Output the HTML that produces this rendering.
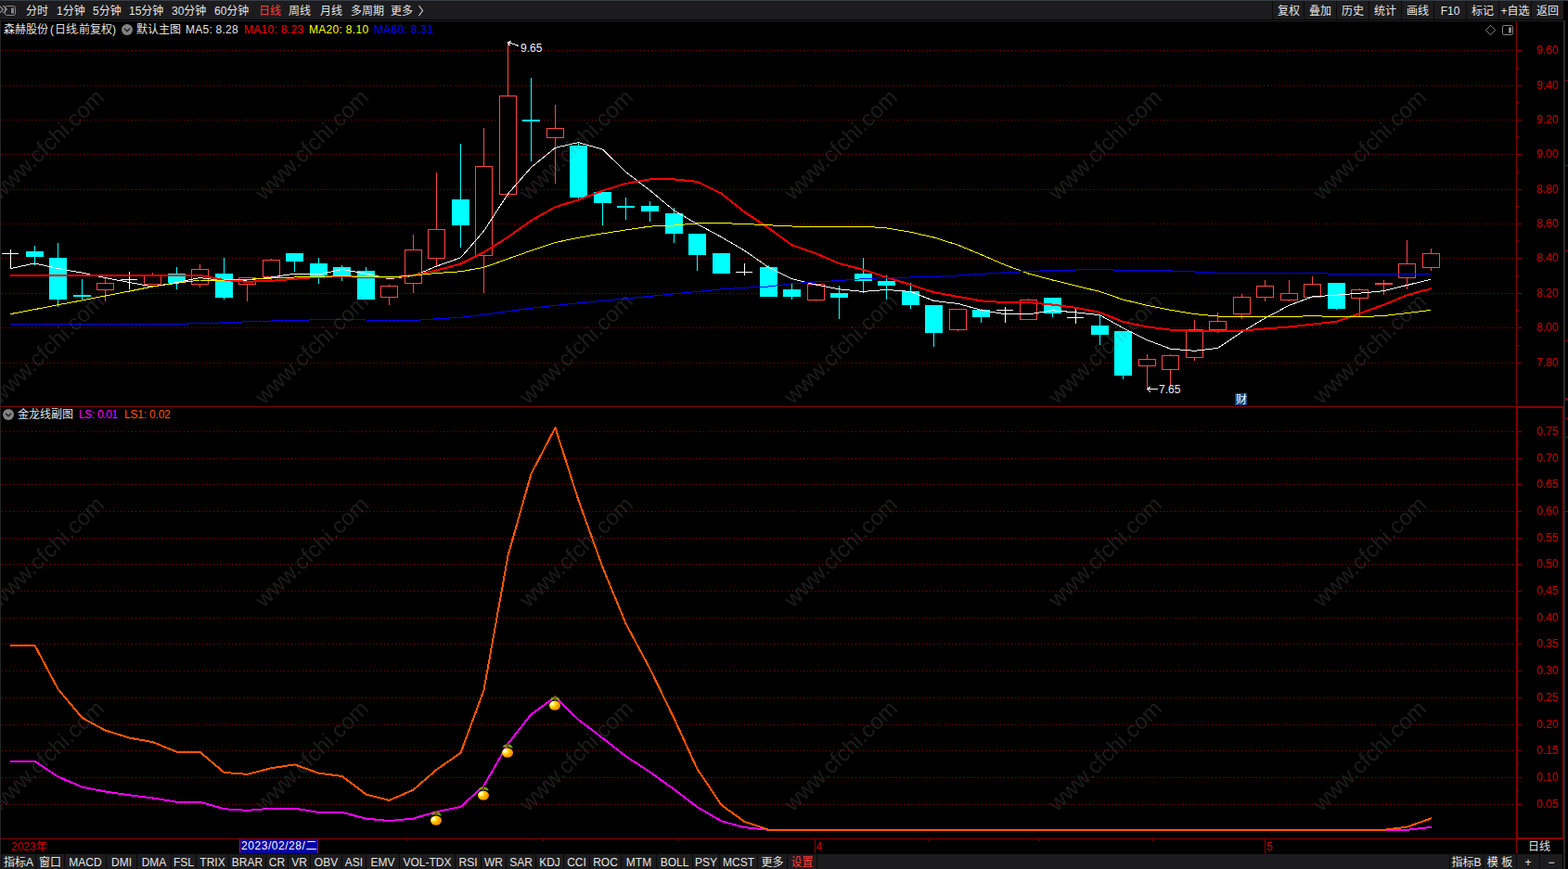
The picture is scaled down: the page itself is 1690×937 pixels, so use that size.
<!DOCTYPE html>
<html><head><meta charset="utf-8"><title>K线图</title>
<style>
html,body{margin:0;padding:0;background:#000;overflow:hidden;}
body{width:1690px;height:937px;position:relative;overflow:hidden;font-family:"Liberation Sans", "Noto Sans CJK SC", sans-serif;font-size:12px;line-height:14px;}
.abs{position:absolute;}
.t{position:absolute;white-space:nowrap;height:14px;line-height:14px;font-size:12px;}
.wm{position:absolute;width:200px;height:30px;line-height:30px;text-align:center;font-size:24px;color:#808080;opacity:0.22;filter:grayscale(1);transform:rotate(-44deg);white-space:nowrap;}
.btn{position:absolute;top:1px;height:20px;background:#1e1e20;}
.tab{position:absolute;top:921px;height:16px;background:#202022;}
#chart{position:absolute;left:0;top:0;}
</style></head><body>

<svg id="chart" width="1690" height="937" viewBox="0 0 1690 937" shape-rendering="crispEdges">
<line x1="2" y1="54.5" x2="1633" y2="54.5" stroke="#880000" stroke-width="1" stroke-dasharray="1 3"/>
<line x1="2" y1="92.5" x2="1633" y2="92.5" stroke="#880000" stroke-width="1" stroke-dasharray="1 3"/>
<line x1="2" y1="129.5" x2="1633" y2="129.5" stroke="#880000" stroke-width="1" stroke-dasharray="1 3"/>
<line x1="2" y1="166.5" x2="1633" y2="166.5" stroke="#880000" stroke-width="1" stroke-dasharray="1 3"/>
<line x1="2" y1="204.5" x2="1633" y2="204.5" stroke="#880000" stroke-width="1" stroke-dasharray="1 3"/>
<line x1="2" y1="241.5" x2="1633" y2="241.5" stroke="#880000" stroke-width="1" stroke-dasharray="1 3"/>
<line x1="2" y1="278.5" x2="1633" y2="278.5" stroke="#880000" stroke-width="1" stroke-dasharray="1 3"/>
<line x1="2" y1="316.5" x2="1633" y2="316.5" stroke="#880000" stroke-width="1" stroke-dasharray="1 3"/>
<line x1="2" y1="353.5" x2="1633" y2="353.5" stroke="#880000" stroke-width="1" stroke-dasharray="1 3"/>
<line x1="2" y1="391.5" x2="1633" y2="391.5" stroke="#880000" stroke-width="1" stroke-dasharray="1 3"/>
<line x1="2" y1="465.5" x2="1633" y2="465.5" stroke="#880000" stroke-width="1" stroke-dasharray="1 3"/>
<line x1="2" y1="494.5" x2="1633" y2="494.5" stroke="#880000" stroke-width="1" stroke-dasharray="1 3"/>
<line x1="2" y1="522.5" x2="1633" y2="522.5" stroke="#880000" stroke-width="1" stroke-dasharray="1 3"/>
<line x1="2" y1="551.5" x2="1633" y2="551.5" stroke="#880000" stroke-width="1" stroke-dasharray="1 3"/>
<line x1="2" y1="580.5" x2="1633" y2="580.5" stroke="#880000" stroke-width="1" stroke-dasharray="1 3"/>
<line x1="2" y1="608.5" x2="1633" y2="608.5" stroke="#880000" stroke-width="1" stroke-dasharray="1 3"/>
<line x1="2" y1="637.5" x2="1633" y2="637.5" stroke="#880000" stroke-width="1" stroke-dasharray="1 3"/>
<line x1="2" y1="666.5" x2="1633" y2="666.5" stroke="#880000" stroke-width="1" stroke-dasharray="1 3"/>
<line x1="2" y1="694.5" x2="1633" y2="694.5" stroke="#880000" stroke-width="1" stroke-dasharray="1 3"/>
<line x1="2" y1="723.5" x2="1633" y2="723.5" stroke="#880000" stroke-width="1" stroke-dasharray="1 3"/>
<line x1="2" y1="752.5" x2="1633" y2="752.5" stroke="#880000" stroke-width="1" stroke-dasharray="1 3"/>
<line x1="2" y1="781.5" x2="1633" y2="781.5" stroke="#880000" stroke-width="1" stroke-dasharray="1 3"/>
<line x1="2" y1="809.5" x2="1633" y2="809.5" stroke="#880000" stroke-width="1" stroke-dasharray="1 3"/>
<line x1="2" y1="838.5" x2="1633" y2="838.5" stroke="#880000" stroke-width="1" stroke-dasharray="1 3"/>
<line x1="2" y1="867.5" x2="1633" y2="867.5" stroke="#880000" stroke-width="1" stroke-dasharray="1 3"/>
<rect x="11" y="269" width="1" height="21" fill="#ffffff"/>
<rect x="2" y="273" width="18" height="1" fill="#ffffff"/>
<rect x="37" y="265" width="1" height="21" fill="#00ffff"/>
<rect x="28" y="271" width="19" height="6" fill="#00ffff"/>
<rect x="62" y="262" width="1" height="69" fill="#00ffff"/>
<rect x="53" y="278" width="19" height="45" fill="#00ffff"/>
<rect x="88" y="301" width="1" height="22" fill="#00ffff"/>
<rect x="79" y="318" width="19" height="2" fill="#00ffff"/>
<rect x="113" y="300" width="1" height="5" fill="#ff4646"/>
<rect x="113" y="313" width="1" height="12" fill="#ff4646"/>
<rect x="104.5" y="305.5" width="18" height="7" fill="#000" stroke="#ff4646" stroke-width="1"/>
<rect x="139" y="293" width="1" height="19" fill="#ffffff"/>
<rect x="130" y="301" width="18" height="1" fill="#ffffff"/>
<rect x="164" y="294" width="1" height="2" fill="#ff4646"/>
<rect x="155.5" y="296.5" width="18" height="10" fill="#000" stroke="#ff4646" stroke-width="1"/>
<rect x="190" y="288" width="1" height="24" fill="#00ffff"/>
<rect x="181" y="295" width="19" height="10" fill="#00ffff"/>
<rect x="215" y="285" width="1" height="5" fill="#ff4646"/>
<rect x="215" y="307" width="1" height="3" fill="#ff4646"/>
<rect x="206.5" y="290.5" width="18" height="16" fill="#000" stroke="#ff4646" stroke-width="1"/>
<rect x="241" y="278" width="1" height="45" fill="#00ffff"/>
<rect x="232" y="295" width="19" height="26" fill="#00ffff"/>
<rect x="266" y="307" width="1" height="18" fill="#ff4646"/>
<rect x="257.5" y="299.5" width="18" height="7" fill="#000" stroke="#ff4646" stroke-width="1"/>
<rect x="292" y="279" width="1" height="1" fill="#ff4646"/>
<rect x="292" y="299" width="1" height="4" fill="#ff4646"/>
<rect x="283.5" y="280.5" width="18" height="18" fill="#000" stroke="#ff4646" stroke-width="1"/>
<rect x="317" y="273" width="1" height="20" fill="#00ffff"/>
<rect x="308" y="273" width="19" height="9" fill="#00ffff"/>
<rect x="343" y="278" width="1" height="28" fill="#00ffff"/>
<rect x="334" y="284" width="19" height="14" fill="#00ffff"/>
<rect x="368" y="286" width="1" height="17" fill="#00ffff"/>
<rect x="359" y="288" width="19" height="10" fill="#00ffff"/>
<rect x="394" y="288" width="1" height="35" fill="#00ffff"/>
<rect x="385" y="292" width="19" height="31" fill="#00ffff"/>
<rect x="419" y="307" width="1" height="1" fill="#ff4646"/>
<rect x="419" y="321" width="1" height="8" fill="#ff4646"/>
<rect x="410.5" y="308.5" width="18" height="12" fill="#000" stroke="#ff4646" stroke-width="1"/>
<rect x="445" y="253" width="1" height="16" fill="#ff4646"/>
<rect x="445" y="306" width="1" height="10" fill="#ff4646"/>
<rect x="436.5" y="269.5" width="18" height="36" fill="#000" stroke="#ff4646" stroke-width="1"/>
<rect x="470" y="186" width="1" height="61" fill="#ff4646"/>
<rect x="470" y="279" width="1" height="9" fill="#ff4646"/>
<rect x="461.5" y="247.5" width="18" height="31" fill="#000" stroke="#ff4646" stroke-width="1"/>
<rect x="496" y="155" width="1" height="112" fill="#00ffff"/>
<rect x="487" y="215" width="19" height="28" fill="#00ffff"/>
<rect x="521" y="138" width="1" height="41" fill="#ff4646"/>
<rect x="521" y="276" width="1" height="40" fill="#ff4646"/>
<rect x="512.5" y="179.5" width="18" height="96" fill="#000" stroke="#ff4646" stroke-width="1"/>
<rect x="547" y="45" width="1" height="58" fill="#ff4646"/>
<rect x="547" y="210" width="1" height="3" fill="#ff4646"/>
<rect x="538.5" y="103.5" width="18" height="106" fill="#000" stroke="#ff4646" stroke-width="1"/>
<rect x="572" y="84" width="1" height="90" fill="#00ffff"/>
<rect x="563" y="129" width="19" height="2" fill="#00ffff"/>
<rect x="598" y="113" width="1" height="25" fill="#ff4646"/>
<rect x="598" y="149" width="1" height="49" fill="#ff4646"/>
<rect x="589.5" y="138.5" width="18" height="10" fill="#000" stroke="#ff4646" stroke-width="1"/>
<rect x="623" y="153" width="1" height="62" fill="#00ffff"/>
<rect x="614" y="157" width="19" height="56" fill="#00ffff"/>
<rect x="649" y="207" width="1" height="36" fill="#00ffff"/>
<rect x="640" y="207" width="19" height="12" fill="#00ffff"/>
<rect x="674" y="213" width="1" height="24" fill="#00ffff"/>
<rect x="665" y="222" width="19" height="2" fill="#00ffff"/>
<rect x="700" y="217" width="1" height="22" fill="#00ffff"/>
<rect x="691" y="222" width="19" height="6" fill="#00ffff"/>
<rect x="726" y="224" width="1" height="38" fill="#00ffff"/>
<rect x="717" y="230" width="19" height="22" fill="#00ffff"/>
<rect x="751" y="252" width="1" height="40" fill="#00ffff"/>
<rect x="742" y="252" width="19" height="23" fill="#00ffff"/>
<rect x="777" y="273" width="1" height="22" fill="#00ffff"/>
<rect x="768" y="273" width="19" height="22" fill="#00ffff"/>
<rect x="802" y="284" width="1" height="13" fill="#ffffff"/>
<rect x="793" y="293" width="18" height="1" fill="#ffffff"/>
<rect x="828" y="286" width="1" height="34" fill="#00ffff"/>
<rect x="819" y="288" width="19" height="32" fill="#00ffff"/>
<rect x="853" y="306" width="1" height="17" fill="#00ffff"/>
<rect x="844" y="312" width="19" height="8" fill="#00ffff"/>
<rect x="879" y="324" width="1" height="1" fill="#ff4646"/>
<rect x="870.5" y="306.5" width="18" height="17" fill="#000" stroke="#ff4646" stroke-width="1"/>
<rect x="904" y="308" width="1" height="36" fill="#00ffff"/>
<rect x="895" y="316" width="19" height="5" fill="#00ffff"/>
<rect x="930" y="278" width="1" height="38" fill="#00ffff"/>
<rect x="921" y="295" width="19" height="8" fill="#00ffff"/>
<rect x="955" y="297" width="1" height="26" fill="#00ffff"/>
<rect x="946" y="303" width="19" height="5" fill="#00ffff"/>
<rect x="981" y="305" width="1" height="28" fill="#00ffff"/>
<rect x="972" y="314" width="19" height="15" fill="#00ffff"/>
<rect x="1006" y="329" width="1" height="45" fill="#00ffff"/>
<rect x="997" y="329" width="19" height="30" fill="#00ffff"/>
<rect x="1032" y="356" width="1" height="1" fill="#ff4646"/>
<rect x="1023.5" y="333.5" width="18" height="22" fill="#000" stroke="#ff4646" stroke-width="1"/>
<rect x="1057" y="333" width="1" height="15" fill="#00ffff"/>
<rect x="1048" y="334" width="19" height="8" fill="#00ffff"/>
<rect x="1083" y="331" width="1" height="17" fill="#ffffff"/>
<rect x="1074" y="334" width="18" height="1" fill="#ffffff"/>
<rect x="1108" y="322" width="1" height="1" fill="#ff4646"/>
<rect x="1099.5" y="323.5" width="18" height="21" fill="#000" stroke="#ff4646" stroke-width="1"/>
<rect x="1134" y="321" width="1" height="21" fill="#00ffff"/>
<rect x="1125" y="321" width="19" height="17" fill="#00ffff"/>
<rect x="1159" y="333" width="1" height="16" fill="#ffffff"/>
<rect x="1150" y="342" width="18" height="1" fill="#ffffff"/>
<rect x="1185" y="339" width="1" height="33" fill="#00ffff"/>
<rect x="1176" y="351" width="19" height="10" fill="#00ffff"/>
<rect x="1210" y="357" width="1" height="52" fill="#00ffff"/>
<rect x="1201" y="357" width="19" height="48" fill="#00ffff"/>
<rect x="1236" y="382" width="1" height="5" fill="#ff4646"/>
<rect x="1236" y="395" width="1" height="25" fill="#ff4646"/>
<rect x="1227.5" y="387.5" width="18" height="7" fill="#000" stroke="#ff4646" stroke-width="1"/>
<rect x="1261" y="382" width="1" height="1" fill="#ff4646"/>
<rect x="1261" y="399" width="1" height="18" fill="#ff4646"/>
<rect x="1252.5" y="383.5" width="18" height="15" fill="#000" stroke="#ff4646" stroke-width="1"/>
<rect x="1287" y="345" width="1" height="10" fill="#ff4646"/>
<rect x="1287" y="386" width="1" height="3" fill="#ff4646"/>
<rect x="1278.5" y="355.5" width="18" height="30" fill="#000" stroke="#ff4646" stroke-width="1"/>
<rect x="1312" y="337" width="1" height="9" fill="#ff4646"/>
<rect x="1312" y="356" width="1" height="3" fill="#ff4646"/>
<rect x="1303.5" y="346.5" width="18" height="9" fill="#000" stroke="#ff4646" stroke-width="1"/>
<rect x="1338" y="317" width="1" height="3" fill="#ff4646"/>
<rect x="1338" y="339" width="1" height="5" fill="#ff4646"/>
<rect x="1329.5" y="320.5" width="18" height="18" fill="#000" stroke="#ff4646" stroke-width="1"/>
<rect x="1363" y="302" width="1" height="6" fill="#ff4646"/>
<rect x="1363" y="321" width="1" height="4" fill="#ff4646"/>
<rect x="1354.5" y="308.5" width="18" height="12" fill="#000" stroke="#ff4646" stroke-width="1"/>
<rect x="1389" y="302" width="1" height="14" fill="#ff4646"/>
<rect x="1389" y="324" width="1" height="1" fill="#ff4646"/>
<rect x="1380.5" y="316.5" width="18" height="7" fill="#000" stroke="#ff4646" stroke-width="1"/>
<rect x="1414" y="298" width="1" height="8" fill="#ff4646"/>
<rect x="1405.5" y="306.5" width="18" height="14" fill="#000" stroke="#ff4646" stroke-width="1"/>
<rect x="1440" y="305" width="1" height="29" fill="#00ffff"/>
<rect x="1431" y="305" width="19" height="28" fill="#00ffff"/>
<rect x="1465" y="311" width="1" height="1" fill="#ff4646"/>
<rect x="1465" y="322" width="1" height="20" fill="#ff4646"/>
<rect x="1456.5" y="312.5" width="18" height="9" fill="#000" stroke="#ff4646" stroke-width="1"/>
<rect x="1491" y="302" width="1" height="16" fill="#ff4646"/>
<rect x="1482" y="305" width="19" height="2" fill="#ff4646"/>
<rect x="1516" y="259" width="1" height="25" fill="#ff4646"/>
<rect x="1516" y="300" width="1" height="12" fill="#ff4646"/>
<rect x="1507.5" y="284.5" width="18" height="15" fill="#000" stroke="#ff4646" stroke-width="1"/>
<rect x="1542" y="268" width="1" height="5" fill="#ff4646"/>
<rect x="1542" y="289" width="1" height="3" fill="#ff4646"/>
<rect x="1533.5" y="273.5" width="18" height="15" fill="#000" stroke="#ff4646" stroke-width="1"/>
<polyline points="11.0,289.6 11.5,289.6 37.5,283.9 62.5,289.6 88.5,294.1 113.5,299.6 139.5,304.5 164.5,309.0 190.5,304.5 215.5,299.6 241.5,302.8 266.5,302.0 292.5,299.0 317.5,295.1 343.5,295.9 368.5,290.4 394.5,295.1 419.5,300.7 445.5,297.5 470.5,287.1 496.5,277.9 521.5,249.1 547.5,209.0 572.5,180.5 598.5,159.3 623.5,153.6 649.5,161.1 674.5,185.4 700.5,205.3 726.5,227.0 751.5,241.6 777.5,255.6 802.5,270.2 828.5,288.3 853.5,300.7 879.5,307.0 904.5,311.9 930.5,314.4 955.5,312.4 981.5,314.4 1006.5,324.4 1032.5,327.4 1057.5,334.3 1083.5,338.8 1108.5,338.8 1134.5,334.8 1159.5,336.8 1185.5,339.8 1210.5,353.7 1236.5,366.7 1261.5,376.1 1287.5,378.3 1312.5,375.4 1338.5,358.0 1363.5,343.0 1389.5,329.3 1414.5,319.9 1440.5,318.2 1465.5,316.2 1491.5,313.7 1516.5,307.5 1542.0,301.2" fill="none" stroke="#ffffff" stroke-width="1" stroke-linejoin="round"/>
<polyline points="11.0,297.1 11.5,297.1 37.5,296.8 62.5,296.8 88.5,296.8 113.5,296.8 139.5,296.8 164.5,296.8 190.5,296.8 215.5,296.8 241.5,302.0 266.5,303.8 292.5,302.8 317.5,300.8 343.5,298.8 368.5,297.6 394.5,299.0 419.5,299.5 445.5,297.0 470.5,291.5 496.5,284.6 521.5,272.1 547.5,255.7 572.5,237.8 598.5,223.2 623.5,215.5 649.5,205.7 674.5,197.9 700.5,193.4 726.5,193.4 751.5,195.9 777.5,208.6 802.5,228.7 828.5,246.0 853.5,264.2 879.5,273.4 904.5,284.1 930.5,290.8 955.5,299.0 981.5,307.0 1006.5,315.2 1032.5,319.9 1057.5,324.4 1083.5,326.1 1108.5,326.1 1134.5,328.6 1159.5,331.8 1185.5,336.8 1210.5,347.0 1236.5,352.5 1261.5,355.6 1287.5,356.8 1312.5,357.0 1338.5,356.5 1363.5,354.5 1389.5,352.5 1414.5,349.7 1440.5,346.8 1465.5,338.1 1491.5,328.6 1516.5,318.2 1542.5,311.2 1543.0,311.2" fill="none" stroke="#ff0000" stroke-width="2" stroke-linejoin="round"/>
<polyline points="11.0,338.6 11.5,338.6 37.5,333.6 62.5,328.7 88.5,323.9 113.5,319.0 139.5,314.0 164.5,309.0 190.5,305.3 215.5,302.0 241.5,302.0 266.5,301.3 292.5,300.0 317.5,299.0 343.5,298.3 368.5,297.8 394.5,298.3 419.5,299.0 445.5,297.0 470.5,294.5 496.5,292.8 521.5,288.3 547.5,279.1 572.5,270.2 598.5,261.5 623.5,256.2 649.5,251.8 674.5,248.0 700.5,244.1 726.5,243.0 751.5,240.9 777.5,240.6 802.5,241.5 828.5,242.8 853.5,244.0 879.5,244.0 904.5,244.0 930.5,244.0 955.5,246.0 981.5,250.3 1006.5,256.0 1032.5,264.2 1057.5,274.6 1083.5,285.8 1108.5,295.0 1134.5,302.0 1159.5,308.2 1185.5,314.4 1210.5,323.1 1236.5,329.3 1261.5,334.3 1287.5,338.6 1312.5,341.0 1338.5,341.0 1363.5,341.0 1389.5,341.3 1414.5,340.8 1440.5,341.3 1465.5,341.8 1491.5,340.5 1516.5,337.6 1542.0,334.3" fill="none" stroke="#ffff00" stroke-width="1" stroke-linejoin="round"/>
<polyline points="11.0,349.5 11.5,349.5 37.5,349.5 62.5,349.5 88.5,349.5 113.5,349.5 139.5,349.5 164.5,349.5 190.5,349.2 215.5,348.8 241.5,347.8 266.5,346.8 292.5,346.0 317.5,345.3 343.5,344.8 368.5,344.3 394.5,345.0 419.5,345.5 445.5,345.5 470.5,343.8 496.5,342.3 521.5,339.3 547.5,335.6 572.5,332.3 598.5,329.4 623.5,326.9 649.5,324.4 674.5,321.9 700.5,319.4 726.5,316.9 751.5,314.4 777.5,311.9 802.5,310.2 828.5,309.0 853.5,305.7 879.5,304.0 904.5,302.5 930.5,300.7 955.5,299.5 981.5,299.0 1006.5,298.5 1032.5,297.0 1057.5,295.3 1083.5,293.8 1108.5,292.5 1134.5,291.5 1159.5,291.0 1185.5,290.3 1210.5,291.5 1236.5,291.9 1261.5,291.9 1287.5,293.0 1312.5,294.2 1338.5,294.2 1363.5,294.2 1389.5,294.2 1414.5,294.2 1440.5,295.5 1465.5,295.5 1491.5,295.5 1516.5,295.5 1542.0,295.5" fill="none" stroke="#0000ff" stroke-width="1" stroke-linejoin="round"/>
<polyline points="11.0,820.7 11.5,820.7 37.5,820.7 62.5,837.4 88.5,848.6 113.5,853.5 139.5,857.3 164.5,860.5 190.5,864.7 215.5,864.7 241.5,872.2 266.5,873.9 292.5,871.7 317.5,871.7 343.5,875.9 368.5,875.9 394.5,882.6 419.5,885.1 445.5,882.6 470.5,875.2 496.5,870.0 521.5,847.2 547.5,802.0 572.5,770.2 598.5,751.5 623.5,776.0 649.5,795.8 674.5,815.5 700.5,832.4 726.5,851.1 751.5,870.2 777.5,885.4 802.5,892.2 828.5,894.8 853.5,894.8 879.5,894.8 904.5,894.8 930.5,894.8 955.5,894.8 981.5,894.8 1006.5,894.8 1032.5,894.8 1057.5,894.8 1083.5,894.8 1108.5,894.8 1134.5,894.8 1159.5,894.8 1185.5,894.8 1210.5,894.8 1236.5,894.8 1261.5,894.8 1287.5,894.8 1312.5,894.8 1338.5,894.8 1363.5,894.8 1389.5,894.8 1414.5,894.8 1440.5,894.8 1465.5,894.8 1491.5,894.8 1516.5,894.8 1542.5,891.9 1543.0,891.9" fill="none" stroke="#ff00ff" stroke-width="2" stroke-linejoin="round"/>
<polyline points="11.0,695.9 11.5,695.9 37.5,695.9 62.5,742.9 88.5,774.0 113.5,787.6 139.5,795.6 164.5,800.1 190.5,810.8 215.5,810.8 241.5,832.9 266.5,834.9 292.5,828.2 317.5,824.4 343.5,833.7 368.5,836.9 394.5,856.5 419.5,863.0 445.5,851.6 470.5,829.9 496.5,811.8 521.5,744.1 547.5,599.2 572.5,510.9 598.5,461.1 623.5,539.5 649.5,611.6 674.5,672.3 700.5,721.0 726.5,774.5 751.5,829.2 777.5,868.0 802.5,886.0 828.5,894.8 853.5,894.8 879.5,894.8 904.5,894.8 930.5,894.8 955.5,894.8 981.5,894.8 1006.5,894.8 1032.5,894.8 1057.5,894.8 1083.5,894.8 1108.5,894.8 1134.5,894.8 1159.5,894.8 1185.5,894.8 1210.5,894.8 1236.5,894.8 1261.5,894.8 1287.5,894.8 1312.5,894.8 1338.5,894.8 1363.5,894.8 1389.5,894.8 1414.5,894.8 1440.5,894.8 1465.5,894.8 1491.5,894.8 1516.5,891.7 1542.5,882.4 1543.0,882.4" fill="none" stroke="#ff5600" stroke-width="2" stroke-linejoin="round"/>
<rect x="1634" y="23" width="1" height="415" fill="#860000"/>
<rect x="1" y="438" width="1634" height="1" fill="#860000"/>
<rect x="1634" y="438" width="2" height="467" fill="#860000"/>
<rect x="1634" y="438" width="51" height="2" fill="#860000"/>
<rect x="1684" y="438" width="1" height="467" fill="#860000"/>
<rect x="1634" y="903" width="51" height="2" fill="#860000"/>
<rect x="1" y="904" width="1634" height="1" fill="#860000"/>
<rect x="1634" y="905" width="1" height="15" fill="#860000"/>
<rect x="1635" y="54" width="5" height="1" fill="#860000"/>
<rect x="1635" y="73" width="2" height="1" fill="#860000"/>
<rect x="1635" y="92" width="5" height="1" fill="#860000"/>
<rect x="1635" y="110" width="2" height="1" fill="#860000"/>
<rect x="1635" y="129" width="5" height="1" fill="#860000"/>
<rect x="1635" y="147" width="2" height="1" fill="#860000"/>
<rect x="1635" y="166" width="5" height="1" fill="#860000"/>
<rect x="1635" y="185" width="2" height="1" fill="#860000"/>
<rect x="1635" y="204" width="5" height="1" fill="#860000"/>
<rect x="1635" y="222" width="2" height="1" fill="#860000"/>
<rect x="1635" y="241" width="5" height="1" fill="#860000"/>
<rect x="1635" y="259" width="2" height="1" fill="#860000"/>
<rect x="1635" y="278" width="5" height="1" fill="#860000"/>
<rect x="1635" y="297" width="2" height="1" fill="#860000"/>
<rect x="1635" y="316" width="5" height="1" fill="#860000"/>
<rect x="1635" y="334" width="2" height="1" fill="#860000"/>
<rect x="1635" y="353" width="5" height="1" fill="#860000"/>
<rect x="1635" y="372" width="2" height="1" fill="#860000"/>
<rect x="1635" y="391" width="5" height="1" fill="#860000"/>
<rect x="1636" y="465" width="4" height="1" fill="#860000"/>
<rect x="1636" y="480" width="1" height="1" fill="#860000"/>
<rect x="1636" y="494" width="4" height="1" fill="#860000"/>
<rect x="1636" y="508" width="1" height="1" fill="#860000"/>
<rect x="1636" y="522" width="4" height="1" fill="#860000"/>
<rect x="1636" y="537" width="1" height="1" fill="#860000"/>
<rect x="1636" y="551" width="4" height="1" fill="#860000"/>
<rect x="1636" y="566" width="1" height="1" fill="#860000"/>
<rect x="1636" y="580" width="4" height="1" fill="#860000"/>
<rect x="1636" y="594" width="1" height="1" fill="#860000"/>
<rect x="1636" y="608" width="4" height="1" fill="#860000"/>
<rect x="1636" y="623" width="1" height="1" fill="#860000"/>
<rect x="1636" y="637" width="4" height="1" fill="#860000"/>
<rect x="1636" y="652" width="1" height="1" fill="#860000"/>
<rect x="1636" y="666" width="4" height="1" fill="#860000"/>
<rect x="1636" y="680" width="1" height="1" fill="#860000"/>
<rect x="1636" y="694" width="4" height="1" fill="#860000"/>
<rect x="1636" y="709" width="1" height="1" fill="#860000"/>
<rect x="1636" y="723" width="4" height="1" fill="#860000"/>
<rect x="1636" y="738" width="1" height="1" fill="#860000"/>
<rect x="1636" y="752" width="4" height="1" fill="#860000"/>
<rect x="1636" y="767" width="1" height="1" fill="#860000"/>
<rect x="1636" y="781" width="4" height="1" fill="#860000"/>
<rect x="1636" y="795" width="1" height="1" fill="#860000"/>
<rect x="1636" y="809" width="4" height="1" fill="#860000"/>
<rect x="1636" y="824" width="1" height="1" fill="#860000"/>
<rect x="1636" y="838" width="4" height="1" fill="#860000"/>
<rect x="1636" y="853" width="1" height="1" fill="#860000"/>
<rect x="1636" y="867" width="4" height="1" fill="#860000"/>
<rect x="1687" y="86" width="3" height="1" fill="#860000"/>
<rect x="1687" y="178" width="3" height="1" fill="#860000"/>
<rect x="1687" y="270" width="3" height="1" fill="#860000"/>
<rect x="1687" y="367" width="3" height="1" fill="#860000"/>
<rect x="1687" y="429" width="3" height="1" fill="#860000"/>
<rect x="1687" y="451" width="3" height="1" fill="#860000"/>
<rect x="1687" y="471" width="3" height="1" fill="#860000"/>
<rect x="1687" y="551" width="3" height="1" fill="#860000"/>
<rect x="1687" y="430" width="3" height="2" fill="#2a2a2c"/>
<rect x="438" y="905" width="1" height="2" fill="#860000"/>
<rect x="585" y="905" width="1" height="2" fill="#860000"/>
<rect x="731" y="905" width="1" height="2" fill="#860000"/>
<rect x="1000" y="905" width="1" height="2" fill="#860000"/>
<rect x="1120" y="905" width="1" height="2" fill="#860000"/>
<rect x="1242" y="905" width="1" height="2" fill="#860000"/>
<rect x="878" y="905" width="1" height="15" fill="#860000"/>
<rect x="1363" y="905" width="1" height="15" fill="#860000"/>
<path d="M547.5 45.5L559 49.5M547.5 45.5L551.5 44.5M547.5 45.5L549.5 49.5" stroke="#fff" stroke-width="1" fill="none"/>
<path d="M1236.5 419.5H1248M1236.5 419.5L1240.5 416.5M1236.5 419.5L1240.5 423.5" stroke="#fff" stroke-width="1" fill="none"/>
</svg>
<div class="wm" style="left:-48.7px;top:141.0px">www.cfchi.com</div>
<div class="wm" style="left:236.3px;top:141.0px">www.cfchi.com</div>
<div class="wm" style="left:521.3px;top:141.0px">www.cfchi.com</div>
<div class="wm" style="left:806.3px;top:141.0px">www.cfchi.com</div>
<div class="wm" style="left:1091.3px;top:141.0px">www.cfchi.com</div>
<div class="wm" style="left:1376.3px;top:141.0px">www.cfchi.com</div>
<div class="wm" style="left:-48.7px;top:360.7px">www.cfchi.com</div>
<div class="wm" style="left:236.3px;top:360.7px">www.cfchi.com</div>
<div class="wm" style="left:521.3px;top:360.7px">www.cfchi.com</div>
<div class="wm" style="left:806.3px;top:360.7px">www.cfchi.com</div>
<div class="wm" style="left:1091.3px;top:360.7px">www.cfchi.com</div>
<div class="wm" style="left:1376.3px;top:360.7px">www.cfchi.com</div>
<div class="wm" style="left:-48.7px;top:580.4px">www.cfchi.com</div>
<div class="wm" style="left:236.3px;top:580.4px">www.cfchi.com</div>
<div class="wm" style="left:521.3px;top:580.4px">www.cfchi.com</div>
<div class="wm" style="left:806.3px;top:580.4px">www.cfchi.com</div>
<div class="wm" style="left:1091.3px;top:580.4px">www.cfchi.com</div>
<div class="wm" style="left:1376.3px;top:580.4px">www.cfchi.com</div>
<div class="wm" style="left:-48.7px;top:800.1px">www.cfchi.com</div>
<div class="wm" style="left:236.3px;top:800.1px">www.cfchi.com</div>
<div class="wm" style="left:521.3px;top:800.1px">www.cfchi.com</div>
<div class="wm" style="left:806.3px;top:800.1px">www.cfchi.com</div>
<div class="wm" style="left:1091.3px;top:800.1px">www.cfchi.com</div>
<div class="wm" style="left:1376.3px;top:800.1px">www.cfchi.com</div>
<div class="abs" style="left:0;top:0;width:1690px;height:1px;background:#383e49"></div>
<div class="abs" style="left:0;top:1px;width:1686px;height:20px;background:#1c1c1e"></div>
<div class="abs" style="left:0;top:22px;width:1687px;height:1px;background:#222223"></div>
<div class="abs" style="left:0;top:22px;width:1px;height:915px;background:#262628"></div>
<div class="abs" style="left:1685px;top:22px;width:2px;height:915px;background:#29292b"></div>
<div class="abs" style="left:1685px;top:1px;width:1px;height:21px;background:#000"></div>
<div class="abs" style="left:1687px;top:1px;width:3px;height:21px;background:#000"></div>
<div class="t " style="left:28px;top:5px;color:#e4e4e4;">分时</div>
<div class="t " style="left:61px;top:5px;color:#e4e4e4;">1分钟</div>
<div class="t " style="left:100px;top:5px;color:#e4e4e4;">5分钟</div>
<div class="t " style="left:139px;top:5px;color:#e4e4e4;">15分钟</div>
<div class="t " style="left:185px;top:5px;color:#e4e4e4;">30分钟</div>
<div class="t " style="left:231px;top:5px;color:#e4e4e4;">60分钟</div>
<div class="t " style="left:279px;top:5px;color:#ff3c3c;">日线</div>
<div class="t " style="left:311px;top:5px;color:#e4e4e4;">周线</div>
<div class="t " style="left:345px;top:5px;color:#e4e4e4;">月线</div>
<div class="t " style="left:378px;top:5px;color:#e4e4e4;">多周期</div>
<div class="t " style="left:421px;top:5px;color:#e4e4e4;">更多</div>
<svg class="abs" style="left:450px;top:5px" width="8" height="13" viewBox="0 0 8 13"><path d="M1.5 1L5.5 6.5L1.5 12" stroke="#d8d8d8" stroke-width="1.1" fill="none"/></svg>
<svg class="abs" style="left:0;top:5px" width="18" height="13" viewBox="0 0 18 13"><rect x="5.5" y="1.5" width="11" height="10" rx="2" fill="none" stroke="#858585" stroke-width="1"/><rect x="12" y="3.5" width="3" height="6" fill="#858585"/><path d="M-0.3 1.7L3.4 5.3L-0.3 8.8M3.3 1.2L7.4 5.1L3.3 9.2" stroke="#9a9a9a" stroke-width="1.1" fill="none"/></svg>
<div class="abs" style="left:1371px;top:1px;width:1px;height:20px;background:#0a0a0a"></div>
<div class="t " style="left:1372px;top:5px;color:#e4e4e4;width:34px;text-align:center;">复权</div>
<div class="abs" style="left:1405px;top:1px;width:1px;height:20px;background:#0a0a0a"></div>
<div class="t " style="left:1406px;top:5px;color:#e4e4e4;width:34px;text-align:center;">叠加</div>
<div class="abs" style="left:1440px;top:1px;width:1px;height:20px;background:#0a0a0a"></div>
<div class="t " style="left:1441px;top:5px;color:#e4e4e4;width:34px;text-align:center;">历史</div>
<div class="abs" style="left:1475px;top:1px;width:1px;height:20px;background:#0a0a0a"></div>
<div class="t " style="left:1476px;top:5px;color:#e4e4e4;width:34px;text-align:center;">统计</div>
<div class="abs" style="left:1510px;top:1px;width:1px;height:20px;background:#0a0a0a"></div>
<div class="t " style="left:1511px;top:5px;color:#e4e4e4;width:34px;text-align:center;">画线</div>
<div class="abs" style="left:1545px;top:1px;width:1px;height:20px;background:#0a0a0a"></div>
<div class="t " style="left:1546px;top:5px;color:#e4e4e4;width:34px;text-align:center;">F10</div>
<div class="abs" style="left:1580px;top:1px;width:1px;height:20px;background:#0a0a0a"></div>
<div class="t " style="left:1581px;top:5px;color:#e4e4e4;width:34px;text-align:center;">标记</div>
<div class="abs" style="left:1615px;top:1px;width:1px;height:20px;background:#0a0a0a"></div>
<div class="t " style="left:1616px;top:5px;color:#e4e4e4;width:34px;text-align:center;">+自选</div>
<div class="abs" style="left:1650px;top:1px;width:1px;height:20px;background:#0a0a0a"></div>
<div class="t " style="left:1651px;top:5px;color:#e4e4e4;width:34px;text-align:center;">返回</div>
<div class="t " style="left:4px;top:25px;color:#e4e4e4;">森赫股份</div>
<div class="t " style="left:54px;top:25px;color:#e4e4e4;">(</div>
<div class="t " style="left:59px;top:25px;color:#e4e4e4;">日线</div>
<div class="t " style="left:82px;top:25px;color:#e4e4e4;">.</div>
<div class="t " style="left:85px;top:25px;color:#e4e4e4;">前复权</div>
<div class="t " style="left:121px;top:25px;color:#e4e4e4;">)</div>
<svg class="abs" style="left:131px;top:26px" width="12" height="12" viewBox="0 0 12 12"><circle cx="6" cy="6" r="6" fill="#828282"/><path d="M3 4.8L6 7.8L9 4.8" stroke="#1a1a1a" stroke-width="1.3" fill="none"/></svg>
<div class="t " style="left:147px;top:25px;color:#e4e4e4;">默认主图</div>
<div class="t " style="left:200px;top:25px;color:#e4e4e4;letter-spacing:0.25px;">MA5: 8.28</div>
<div class="t " style="left:263px;top:25px;color:#ff0000;letter-spacing:0.3px;">MA10: 8.23</div>
<div class="t " style="left:333px;top:25px;color:#ffff00;letter-spacing:0.3px;">MA20: 8.10</div>
<div class="t " style="left:403px;top:25px;color:#0000ff;letter-spacing:0.3px;">MA60: 8.31</div>
<svg class="abs" style="left:1600px;top:26px" width="13" height="13" viewBox="0 0 13 13"><path d="M6.5 1.4L11.6 6.5L6.5 11.6L1.4 6.5Z" stroke="#9a9a9a" stroke-width="0.9" fill="none"/></svg>
<svg class="abs" style="left:1619px;top:27px" width="12" height="11" viewBox="0 0 12 11"><rect x="0.5" y="0.5" width="11" height="10" rx="2" stroke="#8c8c8c" stroke-width="1" fill="none"/><rect x="7" y="2.5" width="3" height="6" fill="#8c8c8c"/></svg>
<div class="t " style="left:561px;top:45px;color:#f0f0f0;">9.65</div>
<div class="t " style="left:1249px;top:413px;color:#f0f0f0;">7.65</div>
<div class="abs" style="left:1331px;top:424px;width:13px;height:13px;background:#08407c"></div>
<div class="abs" style="left:1332px;top:424.5px;width:12px;height:12px;line-height:12px;font-size:12px;color:#ffffff;white-space:nowrap;">财</div>
<div class="t " style="left:1656px;top:47px;color:#c80000;">9.60</div>
<div class="t " style="left:1656px;top:85px;color:#c80000;">9.40</div>
<div class="t " style="left:1656px;top:122px;color:#c80000;">9.20</div>
<div class="t " style="left:1656px;top:159px;color:#c80000;">9.00</div>
<div class="t " style="left:1656px;top:197px;color:#c80000;">8.80</div>
<div class="t " style="left:1656px;top:234px;color:#c80000;">8.60</div>
<div class="t " style="left:1656px;top:271px;color:#c80000;">8.40</div>
<div class="t " style="left:1656px;top:309px;color:#c80000;">8.20</div>
<div class="t " style="left:1656px;top:346px;color:#c80000;">8.00</div>
<div class="t " style="left:1656px;top:384px;color:#c80000;">7.80</div>
<div class="t " style="left:1656px;top:458px;color:#c80000;">0.75</div>
<div class="t " style="left:1656px;top:487px;color:#c80000;">0.70</div>
<div class="t " style="left:1656px;top:515px;color:#c80000;">0.65</div>
<div class="t " style="left:1656px;top:544px;color:#c80000;">0.60</div>
<div class="t " style="left:1656px;top:573px;color:#c80000;">0.55</div>
<div class="t " style="left:1656px;top:601px;color:#c80000;">0.50</div>
<div class="t " style="left:1656px;top:630px;color:#c80000;">0.45</div>
<div class="t " style="left:1656px;top:659px;color:#c80000;">0.40</div>
<div class="t " style="left:1656px;top:687px;color:#c80000;">0.35</div>
<div class="t " style="left:1656px;top:716px;color:#c80000;">0.30</div>
<div class="t " style="left:1656px;top:745px;color:#c80000;">0.25</div>
<div class="t " style="left:1656px;top:774px;color:#c80000;">0.20</div>
<div class="t " style="left:1656px;top:802px;color:#c80000;">0.15</div>
<div class="t " style="left:1656px;top:831px;color:#c80000;">0.10</div>
<div class="t " style="left:1656px;top:860px;color:#c80000;">0.05</div>
<svg class="abs" style="left:3px;top:441px" width="12" height="12" viewBox="0 0 12 12"><circle cx="6" cy="6" r="6" fill="#828282"/><path d="M3 4.8L6 7.8L9 4.8" stroke="#1a1a1a" stroke-width="1.3" fill="none"/></svg>
<div class="t " style="left:19px;top:440px;color:#e4e4e4;">金龙线副图</div>
<div class="t " style="left:85px;top:440px;color:#ff00ff;letter-spacing:-0.35px;">LS: 0.01</div>
<div class="t " style="left:134px;top:440px;color:#ff5600;letter-spacing:-0.2px;">LS1: 0.02</div>
<svg class="abs" style="left:464px;top:874px" width="12" height="16" viewBox="0 0 12 16"><defs><radialGradient id="fg0" cx="0.26" cy="0.32" r="0.8"><stop offset="0" stop-color="#ffffff"/><stop offset="0.16" stop-color="#fff9a8"/><stop offset="0.36" stop-color="#ffe000"/><stop offset="0.65" stop-color="#ffa600"/><stop offset="1" stop-color="#ff8800"/></radialGradient></defs><path d="M5.6 1.6 Q2.5 0.8 0.6 4.6 Q3.6 5.4 5.6 3.6Z" fill="#6fa000"/><path d="M6.6 1.6 Q10 0.8 11.8 5.4 Q8.6 5.8 6.6 3.8Z" fill="#6fa000"/><rect x="5.2" y="0" width="1.8" height="5" fill="#7a4a1e"/><ellipse cx="6" cy="10.6" rx="6" ry="5.2" fill="url(#fg0)"/></svg>
<svg class="abs" style="left:515px;top:847px" width="12" height="16" viewBox="0 0 12 16"><defs><radialGradient id="fg1" cx="0.26" cy="0.32" r="0.8"><stop offset="0" stop-color="#ffffff"/><stop offset="0.16" stop-color="#fff9a8"/><stop offset="0.36" stop-color="#ffe000"/><stop offset="0.65" stop-color="#ffa600"/><stop offset="1" stop-color="#ff8800"/></radialGradient></defs><path d="M5.6 1.6 Q2.5 0.8 0.6 4.6 Q3.6 5.4 5.6 3.6Z" fill="#6fa000"/><path d="M6.6 1.6 Q10 0.8 11.8 5.4 Q8.6 5.8 6.6 3.8Z" fill="#6fa000"/><rect x="5.2" y="0" width="1.8" height="5" fill="#7a4a1e"/><ellipse cx="6" cy="10.6" rx="6" ry="5.2" fill="url(#fg1)"/></svg>
<svg class="abs" style="left:541px;top:801px" width="12" height="16" viewBox="0 0 12 16"><defs><radialGradient id="fg2" cx="0.26" cy="0.32" r="0.8"><stop offset="0" stop-color="#ffffff"/><stop offset="0.16" stop-color="#fff9a8"/><stop offset="0.36" stop-color="#ffe000"/><stop offset="0.65" stop-color="#ffa600"/><stop offset="1" stop-color="#ff8800"/></radialGradient></defs><path d="M5.6 1.6 Q2.5 0.8 0.6 4.6 Q3.6 5.4 5.6 3.6Z" fill="#6fa000"/><path d="M6.6 1.6 Q10 0.8 11.8 5.4 Q8.6 5.8 6.6 3.8Z" fill="#6fa000"/><rect x="5.2" y="0" width="1.8" height="5" fill="#7a4a1e"/><ellipse cx="6" cy="10.6" rx="6" ry="5.2" fill="url(#fg2)"/></svg>
<svg class="abs" style="left:592px;top:750px" width="12" height="16" viewBox="0 0 12 16"><defs><radialGradient id="fg3" cx="0.26" cy="0.32" r="0.8"><stop offset="0" stop-color="#ffffff"/><stop offset="0.16" stop-color="#fff9a8"/><stop offset="0.36" stop-color="#ffe000"/><stop offset="0.65" stop-color="#ffa600"/><stop offset="1" stop-color="#ff8800"/></radialGradient></defs><path d="M5.6 1.6 Q2.5 0.8 0.6 4.6 Q3.6 5.4 5.6 3.6Z" fill="#6fa000"/><path d="M6.6 1.6 Q10 0.8 11.8 5.4 Q8.6 5.8 6.6 3.8Z" fill="#6fa000"/><rect x="5.2" y="0" width="1.8" height="5" fill="#7a4a1e"/><ellipse cx="6" cy="10.6" rx="6" ry="5.2" fill="url(#fg3)"/></svg>
<div class="t " style="left:12px;top:906px;color:#c80000;">2023年</div>
<div class="abs" style="left:258px;top:905px;width:85px;height:15px;background:#d00000"></div>
<div class="abs" style="left:259px;top:905px;width:83px;height:15px;background:#0000a0"></div>
<div class="t " style="left:260px;top:905px;color:#ffffff;letter-spacing:0.55px;">2023/02/28/二</div>
<div class="t " style="left:879.5px;top:906px;color:#c80000;">4</div>
<div class="t " style="left:1365px;top:906px;color:#c80000;">5</div>
<div class="t " style="left:1647px;top:906px;color:#e4e4e4;">日线</div>
<div class="abs" style="left:1px;top:921px;width:1683px;height:16px;background:#1c1c1e"></div>
<div class="abs" style="left:1px;top:921px;width:1px;height:16px;background:#0a0a0a"></div>
<div class="abs" style="left:38px;top:921px;width:1px;height:16px;background:#0a0a0a"></div>
<div class="t " style="left:2px;top:923px;color:#e4e4e4;width:36px;text-align:center;">指标A</div>
<div class="abs" style="left:69px;top:921px;width:1px;height:16px;background:#0a0a0a"></div>
<div class="t " style="left:39px;top:923px;color:#e4e4e4;width:30px;text-align:center;">窗口</div>
<div class="abs" style="left:114px;top:921px;width:1px;height:16px;background:#0a0a0a"></div>
<div class="t " style="left:70px;top:923px;color:#e4e4e4;width:44px;text-align:center;">MACD</div>
<div class="abs" style="left:147px;top:921px;width:1px;height:16px;background:#0a0a0a"></div>
<div class="t " style="left:115px;top:923px;color:#e4e4e4;width:32px;text-align:center;">DMI</div>
<div class="abs" style="left:184px;top:921px;width:1px;height:16px;background:#0a0a0a"></div>
<div class="t " style="left:148px;top:923px;color:#e4e4e4;width:36px;text-align:center;">DMA</div>
<div class="abs" style="left:211px;top:921px;width:1px;height:16px;background:#0a0a0a"></div>
<div class="t " style="left:185px;top:923px;color:#e4e4e4;width:26px;text-align:center;">FSL</div>
<div class="abs" style="left:246px;top:921px;width:1px;height:16px;background:#0a0a0a"></div>
<div class="t " style="left:212px;top:923px;color:#e4e4e4;width:34px;text-align:center;">TRIX</div>
<div class="abs" style="left:286px;top:921px;width:1px;height:16px;background:#0a0a0a"></div>
<div class="t " style="left:247px;top:923px;color:#e4e4e4;width:39px;text-align:center;">BRAR</div>
<div class="abs" style="left:310px;top:921px;width:1px;height:16px;background:#0a0a0a"></div>
<div class="t " style="left:287px;top:923px;color:#e4e4e4;width:23px;text-align:center;">CR</div>
<div class="abs" style="left:334px;top:921px;width:1px;height:16px;background:#0a0a0a"></div>
<div class="t " style="left:311px;top:923px;color:#e4e4e4;width:23px;text-align:center;">VR</div>
<div class="abs" style="left:368px;top:921px;width:1px;height:16px;background:#0a0a0a"></div>
<div class="t " style="left:335px;top:923px;color:#e4e4e4;width:33px;text-align:center;">OBV</div>
<div class="abs" style="left:394px;top:921px;width:1px;height:16px;background:#0a0a0a"></div>
<div class="t " style="left:369px;top:923px;color:#e4e4e4;width:25px;text-align:center;">ASI</div>
<div class="abs" style="left:430px;top:921px;width:1px;height:16px;background:#0a0a0a"></div>
<div class="t " style="left:395px;top:923px;color:#e4e4e4;width:35px;text-align:center;">EMV</div>
<div class="abs" style="left:490px;top:921px;width:1px;height:16px;background:#0a0a0a"></div>
<div class="t " style="left:431px;top:923px;color:#e4e4e4;width:59px;text-align:center;">VOL-TDX</div>
<div class="abs" style="left:518px;top:921px;width:1px;height:16px;background:#0a0a0a"></div>
<div class="t " style="left:491px;top:923px;color:#e4e4e4;width:27px;text-align:center;">RSI</div>
<div class="abs" style="left:545px;top:921px;width:1px;height:16px;background:#0a0a0a"></div>
<div class="t " style="left:519px;top:923px;color:#e4e4e4;width:26px;text-align:center;">WR</div>
<div class="abs" style="left:577px;top:921px;width:1px;height:16px;background:#0a0a0a"></div>
<div class="t " style="left:546px;top:923px;color:#e4e4e4;width:31px;text-align:center;">SAR</div>
<div class="abs" style="left:607px;top:921px;width:1px;height:16px;background:#0a0a0a"></div>
<div class="t " style="left:578px;top:923px;color:#e4e4e4;width:29px;text-align:center;">KDJ</div>
<div class="abs" style="left:635px;top:921px;width:1px;height:16px;background:#0a0a0a"></div>
<div class="t " style="left:608px;top:923px;color:#e4e4e4;width:27px;text-align:center;">CCI</div>
<div class="abs" style="left:669px;top:921px;width:1px;height:16px;background:#0a0a0a"></div>
<div class="t " style="left:636px;top:923px;color:#e4e4e4;width:33px;text-align:center;">ROC</div>
<div class="abs" style="left:707px;top:921px;width:1px;height:16px;background:#0a0a0a"></div>
<div class="t " style="left:670px;top:923px;color:#e4e4e4;width:37px;text-align:center;">MTM</div>
<div class="abs" style="left:746px;top:921px;width:1px;height:16px;background:#0a0a0a"></div>
<div class="t " style="left:708px;top:923px;color:#e4e4e4;width:38px;text-align:center;">BOLL</div>
<div class="abs" style="left:775px;top:921px;width:1px;height:16px;background:#0a0a0a"></div>
<div class="t " style="left:747px;top:923px;color:#e4e4e4;width:28px;text-align:center;">PSY</div>
<div class="abs" style="left:816px;top:921px;width:1px;height:16px;background:#0a0a0a"></div>
<div class="t " style="left:776px;top:923px;color:#e4e4e4;width:40px;text-align:center;">MCST</div>
<div class="abs" style="left:848px;top:921px;width:1px;height:16px;background:#0a0a0a"></div>
<div class="t " style="left:817px;top:923px;color:#e4e4e4;width:31px;text-align:center;">更多</div>
<div class="abs" style="left:880px;top:921px;width:1px;height:16px;background:#0a0a0a"></div>
<div class="t " style="left:849px;top:923px;color:#ff3c3c;width:31px;text-align:center;">设置</div>
<div class="abs" style="left:1562px;top:921px;width:1px;height:16px;background:#0a0a0a"></div>
<div class="t " style="left:1563px;top:923px;color:#e4e4e4;width:35px;text-align:center;">指标B</div>
<div class="abs" style="left:1598px;top:921px;width:1px;height:16px;background:#0a0a0a"></div>
<div class="t " style="left:1599px;top:923px;color:#e4e4e4;width:35px;text-align:center;">模 板</div>
<div class="abs" style="left:1634px;top:921px;width:1px;height:16px;background:#0a0a0a"></div>
<div class="t " style="left:1635px;top:923px;color:#e4e4e4;width:24px;text-align:center;">+</div>
<div class="abs" style="left:1659px;top:921px;width:1px;height:16px;background:#0a0a0a"></div>
<div class="t " style="left:1660px;top:923px;color:#e4e4e4;width:24px;text-align:center;">−</div>
</body></html>
